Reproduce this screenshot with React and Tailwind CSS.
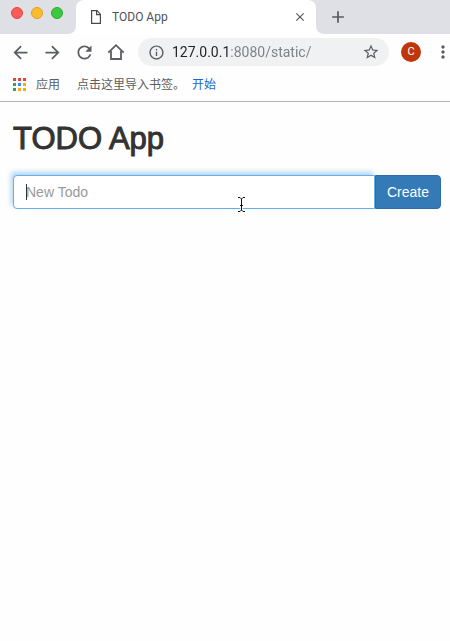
import React, { useState } from 'react';
import { MdArrowBack, MdArrowForward, MdRefresh, MdInfoOutline, MdStarBorder, MdMoreVert, MdClose, MdAdd } from 'react-icons/md';

const appDots = [
  'bg-[#ea4335]', 'bg-[#ea4335]', 'bg-[#ea4335]',
  'bg-[#34a060]', 'bg-[#4285f4]', 'bg-[#f5ad12]',
  'bg-[#34a060]', 'bg-[#f5ad12]', 'bg-[#f5ad12]',
];

const PageIcon = () => (
  <svg viewBox="0 0 12 16" className="w-3 h-4 shrink-0" fill="none" stroke="#47494d" strokeWidth="1.2" aria-hidden="true">
    <path d="M1.6 1.7H7L10.4 5.2V14.3H1.6Z" />
    <path d="M6.6 1.7V5.6H10.4" />
  </svg>
);

const HomeIcon = () => (
  <svg viewBox="0 0 18 18" className="size-[18px]" fill="none" stroke="currentColor" strokeWidth="1.8" aria-hidden="true">
    <path d="M1.3 9.7L9 2.2L16.7 9.7" />
    <path d="M4 8V16H14V8" />
  </svg>
);

const TextCursor = () => (
  <svg viewBox="0 0 9 17" className="absolute left-[224px] top-[21px] z-10 w-[9px] h-[17px] pointer-events-none" fill="none" aria-hidden="true">
    <path d="M1 1.5H3L4.5 3L6 1.5H8M4.5 3V14M1 15.5H3L4.5 14L6 15.5H8M3 9.5H6" stroke="#fff" strokeWidth="2.4" />
    <path d="M1 1.5H3L4.5 3L6 1.5H8M4.5 3V14M1 15.5H3L4.5 14L6 15.5H8M3 9.5H6" stroke="#111" strokeWidth="1" />
  </svg>
);

const TabStrip = () => (
  <div className="flex h-[34px] bg-white">
    {/* Window buttons */}
    <div className="flex w-[76px] shrink-0 gap-2 rounded-br-lg bg-[#dee0e6] pl-[11px] pt-[7px]">
      <button aria-label="Close window" className="size-3 rounded-full border border-[#e2463f] bg-[#fc5b57]" />
      <button aria-label="Minimize window" className="size-3 rounded-full border border-[#dfa023] bg-[#fdbc2e]" />
      <button aria-label="Zoom window" className="size-3 rounded-full border border-[#27aa35] bg-[#3ac940]" />
    </div>

    {/* Active tab */}
    <div className="w-60 bg-[#dee0e6]">
      <div className="flex h-full items-center rounded-t-lg bg-white pl-[14px] pr-[9px]">
        <PageIcon />
        <span className="ml-[10px] flex-1 text-xs text-[#505256]">TODO App</span>
        <button aria-label="Close tab" className="text-[#55585c]">
          <MdClose className="size-[14px]" />
        </button>
      </div>
    </div>

    <div className="flex flex-1 items-center rounded-bl-lg bg-[#dee0e6] pl-3">
      <button aria-label="New tab" className="text-[#55585c]">
        <MdAdd className="size-5" />
      </button>
    </div>
  </div>
);

const Toolbar = () => {
  const [url, setUrl] = useState('127.0.0.1:8080/static/');

  return (
    <div className="flex h-9 items-center pl-[10px] text-[#5a5d62]">
      <div className="flex shrink-0 items-center gap-[11px]">
        <button aria-label="Back"><MdArrowBack className="size-[21px]" /></button>
        <button aria-label="Forward"><MdArrowForward className="size-[21px]" /></button>
        <button aria-label="Reload"><MdRefresh className="size-[21px]" /></button>
        <button aria-label="Home" className="ml-px"><HomeIcon /></button>
      </div>

      {/* Address bar */}
      <div className="ml-[13px] flex h-7 min-w-0 flex-1 items-center rounded-full bg-[#f0f1f3] pl-[10px] pr-[9px]">
        <MdInfoOutline className="size-[17px] shrink-0" />
        <input
          aria-label="Address"
          value={url}
          onChange={(e) => setUrl(e.target.value)}
          className="ml-[7px] min-w-0 flex-1 bg-linear-[90deg,#202124_57px,#7b7f84_57px] bg-clip-text text-sm text-transparent caret-black outline-none"
        />
        <button aria-label="Bookmark this page"><MdStarBorder className="size-[18px]" /></button>
      </div>

      <button aria-label="Profile" className="ml-3 size-5 shrink-0 rounded-full bg-[#bf360c] text-[11px] leading-5 text-white">C</button>
      <button aria-label="Menu" className="-mr-[3px] ml-3 shrink-0">
        <MdMoreVert className="size-5" />
      </button>
    </div>
  );
};

const Bookmarks = () => (
  <nav className="flex h-8 items-center border-b border-[#b3b4b7] pb-[2px] pl-[13px] text-xs text-[#5a5d62]">
    <a href="#apps" className="flex items-center gap-[10px]">
      <span className="grid grid-cols-3 gap-[2px]">
        {appDots.map((color, i) => <span key={i} className={`size-[3px] ${color}`} />)}
      </span>
      应用
    </a>
    <span className="ml-[17px]">点击这里导入书签。</span>
    <a href="#import" className="ml-[7px] text-[#1967d2]">开始</a>
  </nav>
);

const App = () => {
  const [todo, setTodo] = useState('');

  return (
    <div className="min-h-screen bg-[#fefefe] font-[Roboto,'Noto_Sans_CJK_SC',sans-serif]">
      <header>
        <TabStrip />
        <Toolbar />
        <Bookmarks />
      </header>

      <main className="pl-[13px] pr-[9px] pt-5 font-['Liberation_Sans',sans-serif] text-[#333]">
        <h1 className="text-[31px] leading-[33px] [-webkit-text-stroke:1px_#333]">TODO App</h1>

        <form className="relative mt-5 flex h-[34px]" onSubmit={(e) => e.preventDefault()}>
          <input
            type="text"
            aria-label="New Todo"
            placeholder="New Todo"
            value={todo}
            onChange={(e) => setTodo(e.target.value)}
            className="min-w-0 flex-1 rounded-l border border-[#66afe9] bg-white px-3 text-sm shadow-[-2px_-3px_5px_rgba(102,175,233,0.5)] outline-none placeholder:text-[#999]"
          />
          {/* Text caret */}
          {!todo && <span className="absolute left-[13px] top-[9px] h-4 w-px bg-[#333]" />}
          <button type="submit" className="w-[66px] rounded-r border border-[#2e6da4] bg-[#337ab7] text-sm text-white">
            Create
          </button>
          <TextCursor />
        </form>
      </main>
    </div>
  );
};

export default App;
